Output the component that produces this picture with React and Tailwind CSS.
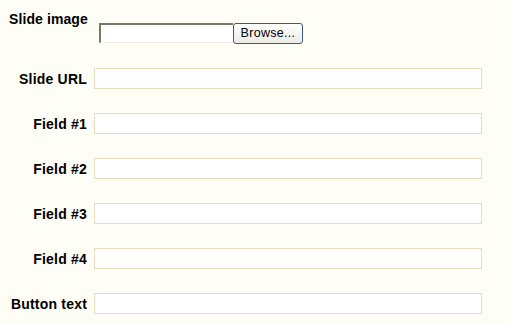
export default function App() {
    const rows = ["Slide URL", "Field #1", "Field #2", "Field #3", "Field #4", "Button text"];

    return (
        <div className="w-[510px] h-[324px] bg-[#fffef6] font-['Liberation_Sans',Arial,sans-serif] text-[14px] font-bold text-black overflow-hidden">
            <div className="flex pt-[9px]">
                <div className="w-[88px] pl-[9px] leading-[20px] tracking-[0.1px]">Slide image</div>
                <div className="flex pt-[14px] pl-[11px]">
                    <div className="w-[134px] h-[20px] bg-white border-t-2 border-l-2 border-t-[#7d7862] border-l-[#7d7862] border-b border-b-[#f0ece0]"></div>
                    <button className="w-[70px] h-[21px] rounded-[3px] border border-[#3e5a78] bg-gradient-to-b from-white to-[#ecebe5] text-[12.5px] font-normal text-black leading-none tracking-[0.3px]">
                        Browse...
                    </button>
                </div>
            </div>
            <div className="flex flex-col gap-[24px] pt-[24px]">
                {rows.map((r) => (
                    <div key={r} className="flex items-center">
                        <div className="w-[87px] text-right leading-[20px] tracking-[0.2px]">{r}</div>
                        <div className="ml-[7px] w-[388px] h-[21px] bg-white border border-[#e8dcc0]"></div>
                    </div>
                ))}
            </div>
        </div>
    );
}
